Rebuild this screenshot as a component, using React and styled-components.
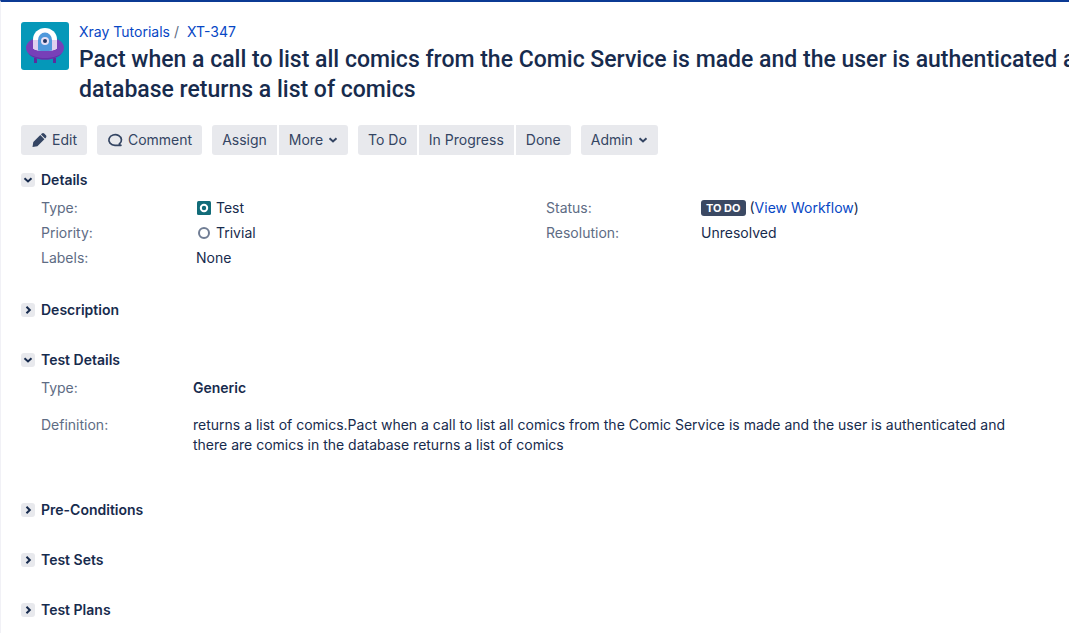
import styled, { createGlobalStyle, ThemeProvider } from "styled-components";

const theme = {
  text: "#172b4d",
  label: "#5e6c84",
  link: "#0747c5",
  button: "#e8e9ed",
  buttonText: "#344563",
  navy: "#0b3a94",
};

const GlobalStyle = createGlobalStyle`
  * {
    box-sizing: border-box;
  }
  body {
    margin: 0;
    background: #fff;
    color: ${theme.text};
    font-family: Inter, "Liberation Sans", sans-serif;
    font-size: 14px;
    line-height: 20px;
  }
`;

const Page = styled.div`
  min-height: 100vh;
  border-top: 2px solid ${({ theme }) => theme.navy};
  border-left: 1px solid #f1f1f6;
  padding: 20px 0 0 20px;
  overflow: hidden;
`;

const Header = styled.header`
  display: flex;
  gap: 10px;
  margin-bottom: 20px;
`;

const Avatar = styled.svg`
  flex: none;
  width: 48px;
  height: 48px;
`;

const Breadcrumbs = styled.nav`
  display: flex;
  gap: 4px;
  color: ${({ theme }) => theme.label};
  & > a:last-child {
    margin-left: 4px;
  }
`;

const Link = styled.a`
  color: ${({ theme }) => theme.link};
  text-decoration: none;
  &:hover {
    text-decoration: underline;
  }
`;

const Title = styled.h1`
  margin: 3px 0 0;
  font-family: Roboto, "Liberation Sans", sans-serif;
  font-size: 23px;
  font-weight: 500;
  line-height: 30px;
  white-space: nowrap;
`;

const Toolbar = styled.div`
  display: flex;
  gap: 10px;
  margin-bottom: 15px;
`;

const ButtonGroup = styled.div`
  display: flex;
  gap: 2px;
  border-radius: 3px;
  overflow: hidden;
`;

const Button = styled.button`
  display: flex;
  align-items: center;
  gap: 5px;
  height: 30px;
  padding: 0 10px;
  border: 0;
  background: ${({ theme }) => theme.button};
  color: ${({ theme }) => theme.buttonText};
  font: inherit;
  white-space: nowrap;
  cursor: pointer;
  &:hover {
    background: #dcdee4;
  }
`;

const Icon = styled.svg`
  flex: none;
  width: ${({ $size }) => $size || 16}px;
  height: ${({ $size }) => $size || 16}px;
`;

const Sections = styled.main`
  display: flex;
  flex-direction: column;
  gap: 30px;
`;

const SectionHeader = styled.h2`
  display: flex;
  align-items: center;
  gap: 6px;
  margin: 0;
  font-size: 14px;
  font-weight: 600;
  line-height: 20px;
`;

const Toggle = styled.button`
  display: flex;
  align-items: center;
  justify-content: center;
  width: 14px;
  height: 14px;
  padding: 0;
  border: 0;
  border-radius: 3px;
  background: ${({ theme }) => theme.button};
  color: ${({ theme }) => theme.text};
  cursor: pointer;
`;

const Columns = styled.div`
  display: grid;
  grid-template-columns: 1fr 1fr;
  padding: 8px 18px 2px 20px;
`;

const Fields = styled.dl`
  display: flex;
  flex-direction: column;
  gap: 5px;
  margin: 0;
`;

const TestFields = styled(Fields)`
  gap: 17px;
  padding: 8px 60px 15px 20px;
`;

const Row = styled.div`
  display: grid;
  grid-template-columns: ${({ $label }) => $label || 155}px 1fr;
`;

const Label = styled.dt`
  color: ${({ theme }) => theme.label};
`;

const Value = styled.dd`
  display: flex;
  align-items: center;
  gap: 4px;
  margin: 0;
  font-weight: ${({ $strong }) => ($strong ? 600 : 400)};
`;

const Lozenge = styled.span`
  padding: 0 5px;
  border-radius: 3px;
  background: #3b4963;
  color: #fff;
  font-size: 11px;
  font-weight: 700;
  line-height: 16px;
`;

function Chevron({ right }) {
  return (
    <Icon $size={10} viewBox="0 0 10 10" aria-hidden="true">
      <path
        d={right ? "M3.5 1.8 6.8 5 3.5 8.2" : "M1.5 3.2 5 6.4l3.5-3.2"}
        fill="none"
        stroke="currentColor"
        strokeWidth="2"
      />
    </Icon>
  );
}

function ProjectAvatar() {
  return (
    <Avatar viewBox="0 0 48 48" role="img" aria-label="Xray Tutorials">
      <rect width="48" height="48" rx="3" fill="#0598b9" />
      <path d="M13 36h3v5h-3zM32 36h3v5h-3z" fill="#5a2ca0" />
      <ellipse cx="24" cy="26" rx="19" ry="11.5" fill="#7740b8" />
      <path d="M7 31c3 4 9 6.500 17 6.500S38 35 41 31c-4 3.500-10 5-17 5S11 34.500 7 31z" fill="#6330a8" />
      <path d="M12 26V17.500a12 11.500 0 0 1 24 0V26c-1 4-23 4-24 0z" fill="#fff" />
      <path d="M12 18h24v8c-1 4-23 4-24 0z" fill="#dfd0ee" />
      <path d="M17 28.500V18a7 7.500 0 0 1 14 0v10.500c-3 .8-11 .8-14 0z" fill="#5099dc" />
      <circle cx="24" cy="19" r="4" fill="#e9e0f5" />
      <circle cx="24" cy="19" r="2" fill="#243563" />
    </Avatar>
  );
}

function PencilIcon() {
  return (
    <Icon viewBox="0 0 16 16" aria-hidden="true">
      <path
        d="M1.500 15l.8-4.900 7-7 4.100 4.100-7 7zM10 2.400l.8-.8c.8-.7 1.700-.7 2.400 0l1.700 1.700c.7.700.7 1.600 0 2.400l-.8.800z"
        fill="currentColor"
      />
    </Icon>
  );
}

function CommentIcon() {
  return (
    <Icon viewBox="0 0 16 16" aria-hidden="true">
      <path
        d="M12.300 12A6.300 5.300 0 1 0 8 13.300h5.900c-.9-.3-1.400-.7-1.600-1.300z"
        fill="none"
        stroke="currentColor"
        strokeWidth="1.700"
        strokeLinejoin="round"
      />
    </Icon>
  );
}

function Section({ title, children }) {
  return (
    <section>
      <SectionHeader>
        <Toggle aria-label={title} aria-expanded={Boolean(children)}>
          <Chevron right={!children} />
        </Toggle>
        {title}
      </SectionHeader>
      {children}
    </section>
  );
}

export default function App() {
  return (
    <ThemeProvider theme={theme}>
      <GlobalStyle />
      <Page>
        <Header>
          <ProjectAvatar />
          <div>
            <Breadcrumbs>
              <Link href="#project">Xray Tutorials</Link>
              <span>/</span>
              <Link href="#issue">XT-347</Link>
            </Breadcrumbs>
            <Title>
              Pact when a call to list all comics from the Comic Service is made
              and the user is authenticated and
              <br />
              database returns a list of comics
            </Title>
          </div>
        </Header>

        <Toolbar>
          <ButtonGroup>
            <Button>
              <PencilIcon />
              Edit
            </Button>
          </ButtonGroup>
          <ButtonGroup>
            <Button>
              <CommentIcon />
              Comment
            </Button>
          </ButtonGroup>
          <ButtonGroup>
            <Button>Assign</Button>
            <Button>
              More
              <Chevron />
            </Button>
          </ButtonGroup>
          <ButtonGroup>
            <Button>To Do</Button>
            <Button>In Progress</Button>
            <Button>Done</Button>
          </ButtonGroup>
          <ButtonGroup>
            <Button>
              Admin
              <Chevron />
            </Button>
          </ButtonGroup>
        </Toolbar>

        <Sections>
          <Section title="Details">
            <Columns>
              <Fields>
                <Row>
                  <Label>Type:</Label>
                  <Value>
                    <Icon viewBox="0 0 16 16" aria-hidden="true">
                      <rect x="1" y="1" width="14" height="14" rx="1.500" fill="#126c79" />
                      <circle cx="8" cy="8" r="3.200" fill="none" stroke="#fff" strokeWidth="2" />
                    </Icon>
                    Test
                  </Value>
                </Row>
                <Row>
                  <Label>Priority:</Label>
                  <Value>
                    <Icon viewBox="0 0 16 16" aria-hidden="true">
                      <circle cx="8" cy="8" r="5" fill="none" stroke="#707d94" strokeWidth="2" />
                    </Icon>
                    Trivial
                  </Value>
                </Row>
                <Row>
                  <Label>Labels:</Label>
                  <Value>None</Value>
                </Row>
              </Fields>
              <Fields>
                <Row>
                  <Label>Status:</Label>
                  <Value>
                    <Lozenge>TO DO</Lozenge>
                    <span>
                      (<Link href="#workflow">View Workflow</Link>)
                    </span>
                  </Value>
                </Row>
                <Row>
                  <Label>Resolution:</Label>
                  <Value>Unresolved</Value>
                </Row>
              </Fields>
            </Columns>
          </Section>

          <Section title="Description" />

          <Section title="Test Details">
            <TestFields>
              <Row $label={152}>
                <Label>Type:</Label>
                <Value $strong>Generic</Value>
              </Row>
              <Row $label={152}>
                <Label>Definition:</Label>
                <Value>
                  returns a list of comics.Pact when a call to list all comics
                  from the Comic Service is made and the user is authenticated
                  and there are comics in the database returns a list of comics
                </Value>
              </Row>
            </TestFields>
          </Section>

          <Section title="Pre-Conditions" />
          <Section title="Test Sets" />
          <Section title="Test Plans" />
        </Sections>
      </Page>
    </ThemeProvider>
  );
}
